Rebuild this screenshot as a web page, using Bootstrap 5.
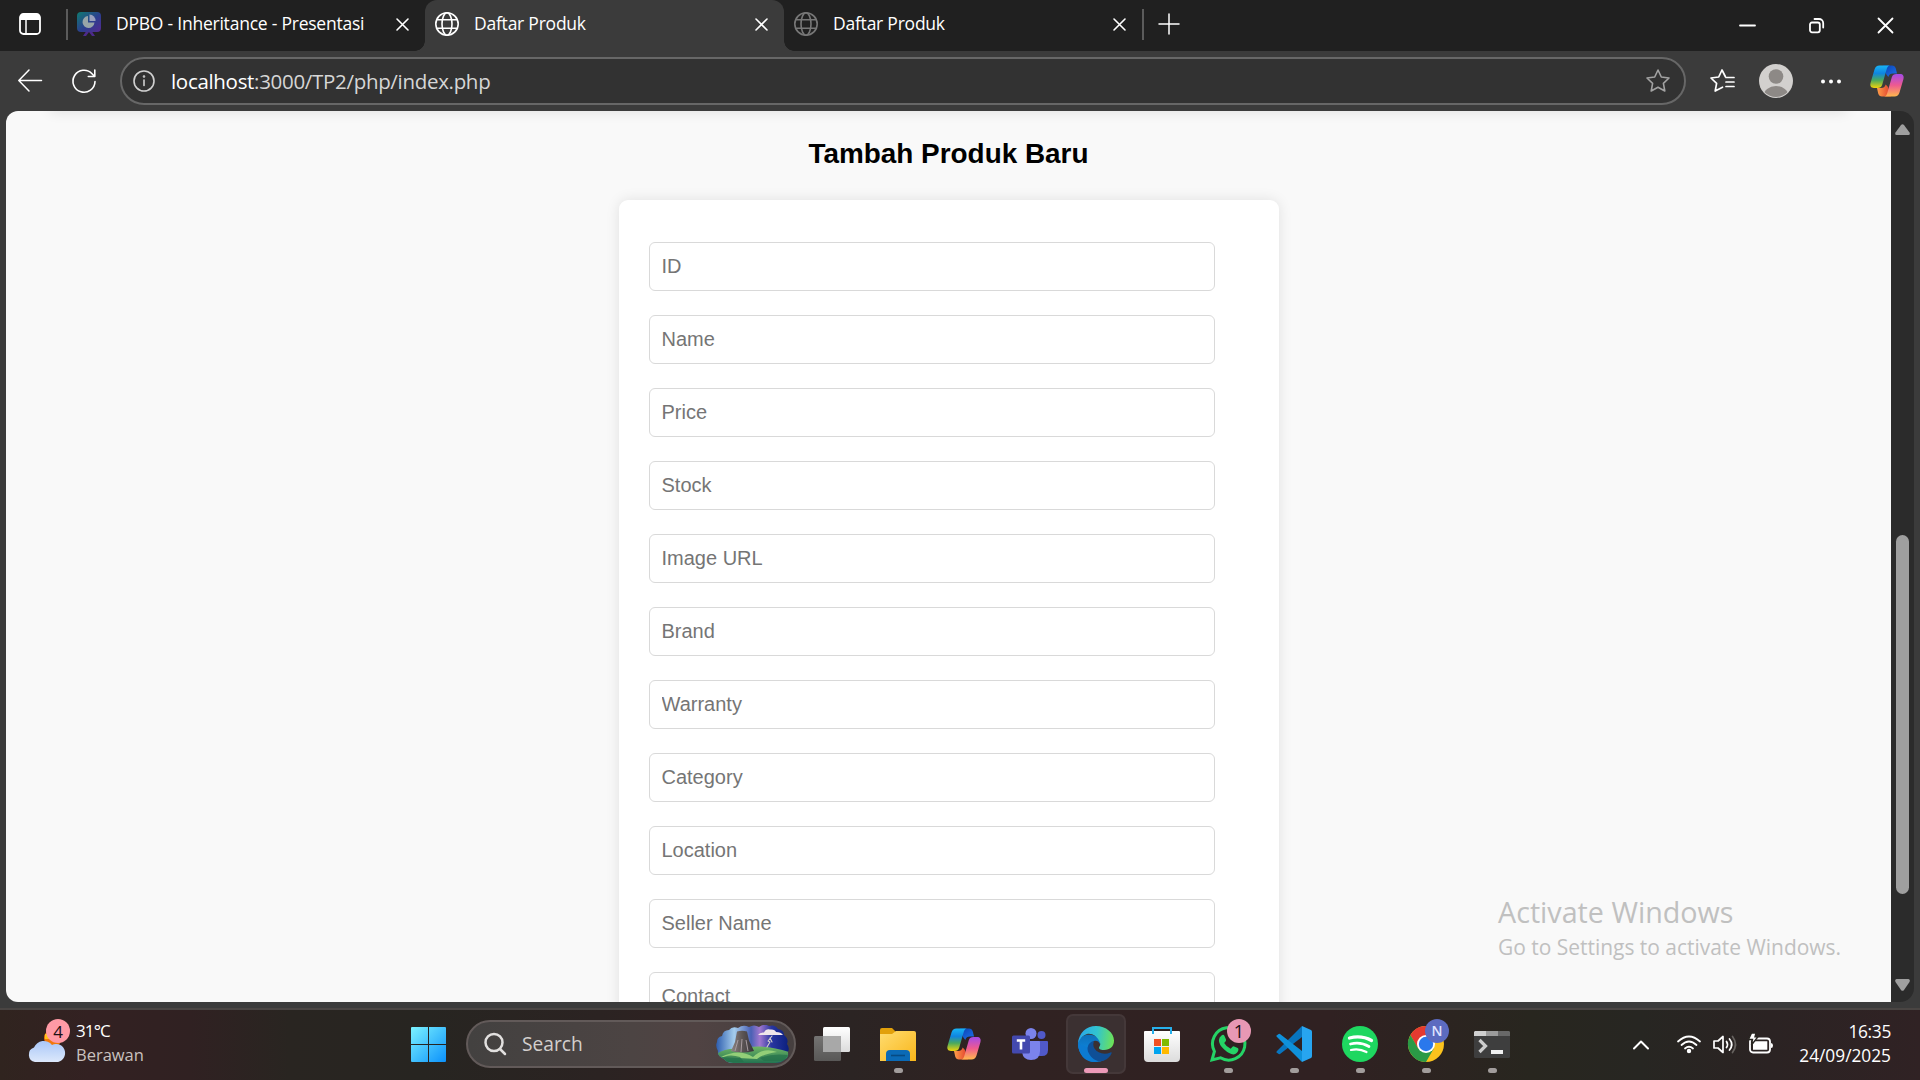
<!DOCTYPE html>
<html lang="id">
<head>
<meta charset="utf-8">
<title>Daftar Produk</title>
<link href="https://cdn.jsdelivr.net/npm/bootstrap@5.3.0/dist/css/bootstrap.min.css" rel="stylesheet">
<style>
html,body{height:1080px;overflow:hidden}
body{width:1920px;background:#3b3b3b;font-family:"Open Sans","Noto Sans",sans-serif;color:#fff;line-height:1}
svg{display:block;flex:none;overflow:visible}
.ln{fill:none;stroke:currentColor;stroke-linecap:round;stroke-linejoin:round}
.tabstrip{height:51px;background:#202020}
.tab-actions{width:66px;padding-left:19px;margin-top:-3px}
.vsep{width:2px;height:31px;background:#5b5b5b;flex:none;margin-top:-2px}
.btab{height:51px;font-size:17.500px;letter-spacing:-.23px;padding-bottom:3px}
.btab-label{margin-left:15px;white-space:nowrap;flex:1}
.btab-1{width:357px;padding-left:9px;padding-right:16px}
.btab-2{width:359px;padding-left:10px;padding-right:16px;background:#3b3b3b;border-radius:12px 12px 0 0;position:relative}
.btab-2::before,.btab-2::after{content:"";position:absolute;bottom:0;width:10px;height:10px}
.btab-2::before{left:-10px;background:radial-gradient(circle at 0 0,transparent 9.5px,#3b3b3b 10px)}
.btab-2::after{right:-10px;background:radial-gradient(circle at 100% 0,transparent 9.5px,#3b3b3b 10px)}
.btab-3{width:358px;padding-left:10px;padding-right:16px}
.new-tab{margin-left:14px;margin-top:-4px}
.win-ctl{padding-right:27px;gap:54px}
.toolbar{height:60px;padding:0 16px 0 18px}
.addr{width:1566px;height:48px;border:2px solid #676767;border-radius:24px;background:#323232;margin-left:24px;padding:0 14px 0 11px;font-size:20.500px;letter-spacing:-.31px}
.addr-path{color:#d6d6d6;margin-left:16px;padding-top:1px}
.viewport-row{height:891px;padding:0 6px}
.page{width:1885px;height:891px;background:#f9f9f9;border-radius:12px 0 0 12px;overflow:hidden;position:relative;font-family:"Liberation Sans",Arial,sans-serif}
.page-shadow{position:absolute;left:44px;right:44px;top:-12px;height:12px;box-shadow:0 0 14px rgba(0,0,0,.12)}
.page-title{font-size:27.900px;font-weight:700;color:#000;margin:27px 0 31px;line-height:31px}
.form-box{width:660px;height:1000px;background:#fff;border-radius:9px;box-shadow:0 0 14px rgba(0,0,0,.1);padding:42px 30px 0;gap:24px;flex:none}
.form-box .form-control{width:566px;height:49px;flex:none;border:1px solid #d9d9d9;border-radius:6px;padding:0 12px;font-size:20px;color:#757575;background:#fff;line-height:47px}
.form-box .form-control::placeholder{color:#757575;opacity:1}
.watermark{position:absolute;left:1492px;top:783px;color:#c0c0c0;font-family:"Open Sans",sans-serif;white-space:nowrap}
.wm-1{font-size:28.700px;line-height:36px}
.wm-2{font-size:20.950px;line-height:34px}
.sbar{width:23px;height:891px;background:#2b2b2b;border-radius:0 14px 14px 0;padding:13px 0 11px}
.thumb{width:13px;height:359px;background:#9f9f9f;border-radius:7px;margin-top:400px}
.win-edge{height:8px;border-bottom:2px solid #4a4543}
.taskbar{height:70px;background:linear-gradient(90deg,#30241f 0,#332122 90px,#302122 190px,#292521 290px,#272521 420px,#2b2322 600px,#302122 720px,#2b2423 850px,#302222 1000px,#302122 1330px,#28261f 1530px,#272622 1640px,#2b2323 1770px,#302224 1920px)}
.weather{width:411px;padding:0 0 4px 28px;font-size:16.500px}
.weather-ico{position:relative;width:42px;height:48px}
.bub{position:absolute;width:24px;height:24px;border-radius:50%;font-size:17px;color:#1b1014;display:flex;align-items:center;justify-content:center;line-height:1}
.bub-w{right:0;top:0;background:#ff9aa5}
.bub-c{left:32px;top:9px;background:#e898b4;font-size:18px}
.bub-n{left:32px;top:9px;background:#5c6bc0;color:#dfe3ff;font-size:14px;font-weight:600}
.weather-txt{gap:8px;margin-left:6px}
.temp{font-size:17px;letter-spacing:-.9px}
.muted-t{color:#c9c1bf}
.find{width:330px;height:48px;border:2px solid #625a59;border-radius:24px;background:linear-gradient(90deg,#434140,#4c4443 50%,#504343 70%,#463f3f);margin-left:20px;margin-top:-2px;padding:0 5px 0 16px;font-size:19.200px;color:#d3cfcd}
.apps{margin-left:3px}
.slot{width:66px;height:70px;position:relative}
.slot.on::before{content:"";position:absolute;left:3px;top:4px;width:60px;height:60px;border-radius:7px;background:#3b3031;border:2px solid #443839}
.slot svg{position:relative}
.slot .ico{height:68px}
.run{position:absolute;left:50%;top:58px;width:9px;height:5px;margin-left:-4.5px;border-radius:3px;background:#a29d9c}
.run.act{width:24px;margin-left:-12px;background:#ec9ab8}
.tray{padding-right:29px}
.clock{font-size:17.300px;width:117px;gap:7px;padding-bottom:3px}
.clock-h{letter-spacing:-.3px}
</style>
<script src="https://cdn.jsdelivr.net/npm/bootstrap@5.3.0/dist/js/bootstrap.bundle.min.js"></script>
</head>
<body class="d-flex flex-column m-0">
<svg width="0" height="0" class="position-absolute">
<defs>
<linearGradient id="cpA" x1="0" y1="0" x2="0" y2="1"><stop offset="0" stop-color="#18b4f5"/><stop offset=".35" stop-color="#0f85e0"/><stop offset=".65" stop-color="#4aa95e"/><stop offset="1" stop-color="#f2d40a"/></linearGradient>
<linearGradient id="cpB" x1="0" y1="0" x2="0" y2="1"><stop offset="0" stop-color="#a44ae8"/><stop offset=".5" stop-color="#ee5a90"/><stop offset="1" stop-color="#ffb84d"/></linearGradient>
<linearGradient id="cpC" x1="0" y1="0" x2="1" y2="1"><stop offset="0" stop-color="#0b3fae"/><stop offset="1" stop-color="#1d74ee"/></linearGradient>
<linearGradient id="cpD" x1="0" y1="0" x2="1" y2="0"><stop offset="0" stop-color="#ffa04a"/><stop offset="1" stop-color="#e0392b"/></linearGradient>
<linearGradient id="win" gradientUnits="userSpaceOnUse" x1="0" y1="0" x2="35" y2="35"><stop offset="0" stop-color="#7cf3ff"/><stop offset="1" stop-color="#0b91fb"/></linearGradient>
<linearGradient id="cld" x1="0" y1="0" x2="0" y2="1"><stop offset="0" stop-color="#a9c7f8"/><stop offset="1" stop-color="#dce8fb"/></linearGradient>
<linearGradient id="edA" x1="0" y1=".5" x2="1" y2=".6"><stop offset="0" stop-color="#2aa7ea"/><stop offset=".5" stop-color="#31c4cf"/><stop offset="1" stop-color="#6fe354"/></linearGradient>
<linearGradient id="edB" x1="0" y1="0" x2="0" y2="1"><stop offset="0" stop-color="#0f6fb8"/><stop offset=".6" stop-color="#0c86de"/><stop offset="1" stop-color="#0c78d3"/></linearGradient>
<linearGradient id="fol" x1="0" y1="0" x2="1" y2="1"><stop offset="0" stop-color="#ffdc70"/><stop offset="1" stop-color="#f9b61a"/></linearGradient>
<linearGradient id="fav" x1="0" y1="0" x2="1" y2="1"><stop offset="0" stop-color="#0f7b70"/><stop offset=".55" stop-color="#2c3e8e"/><stop offset="1" stop-color="#562a91"/></linearGradient>
<linearGradient id="gry" x1="0" y1="0" x2="0" y2="1"><stop offset="0" stop-color="#fff"/><stop offset="1" stop-color="#dcdcdc"/></linearGradient>
<linearGradient id="drk" x1="0" y1="0" x2="0" y2="1"><stop offset="0" stop-color="#747372"/><stop offset="1" stop-color="#595857"/></linearGradient>
<linearGradient id="sky" x1="0" y1="0" x2="1" y2="0"><stop offset="0" stop-color="#2c5cae"/><stop offset=".25" stop-color="#a5cdec"/><stop offset=".48" stop-color="#4a60b4"/><stop offset=".6" stop-color="#a078cf"/><stop offset=".76" stop-color="#2836a0"/><stop offset="1" stop-color="#0b1f7c"/></linearGradient>
<linearGradient id="rock" x1="0" y1="0" x2="1" y2="0"><stop offset="0" stop-color="#8d8482"/><stop offset=".5" stop-color="#5b5454"/><stop offset="1" stop-color="#38343a"/></linearGradient>
<linearGradient id="hill" x1="0" y1="0" x2="0" y2="1"><stop offset="0" stop-color="#6fb565"/><stop offset="1" stop-color="#1f7050"/></linearGradient>
<g id="copilot"><path fill="url(#cpC)" d="M13 .5h9c2 0 3.200 1 3.800 3l1.200 5h-4c-2.500 0-4 1-4.700 3.500L16 9Z"/><path fill="url(#cpD)" d="M21 31.500h-9c-2 0-3.200-1-3.800-3L7 23h4c2.500 0 4-1 4.700-3.500L18 22Z"/><path fill="url(#cpA)" d="M9.500.5h10.500c-1.700 0-2.600 1.300-3.200 3.300l-4.600 16c-.7 2.300-2.200 3.200-4.700 3.200H4c-3 0-4.300-2-3.400-5.200L4.500 4.500C5.300 1.800 6.900.5 9.500.5Z"/><path fill="url(#cpB)" d="M24.500 31.500H14c1.700 0 2.600-1.300 3.200-3.300l4.600-16C22.500 9.900 24 9 26.500 9H30c3 0 4.300 2 3.400 5.200l-3.900 13.300c-.8 2.700-2.400 4-5 4Z"/></g>
<g id="globe" fill="none" stroke="currentColor" stroke-width="1.600"><circle cx="12" cy="12" r="11.200"/><ellipse cx="12" cy="12" rx="5" ry="11.200"/><path d="M2 7.800h20M2 16.200h20"/></g>
<path id="star" d="M12 1l3.300 7 7.700 1-5.600 5.300 1.400 7.700-6.800-3.700L5.200 22l1.400-7.700L1 9l7.700-1Z"/>
<path id="xx" d="M1 1l11 11M12 1L1 12"/>
</defs>
</svg>

<header class="tabstrip d-flex align-items-center flex-shrink-0">
  <div class="tab-actions"><svg width="22" height="22"><rect class="ln" x="1" y="1" width="20" height="20" rx="3.500" stroke-width="1.800"/><path fill="#fff" d="M1 7V4a3 3 0 0 1 3-3h14a3 3 0 0 1 3 3v3Z"/><path class="ln" stroke-width="1.500" d="M7 7v14"/></svg></div>
  <span class="vsep"></span>
  <div class="btab btab-1 d-flex align-items-center">
    <svg width="24" height="24"><path fill="#4d2a8c" d="M6 24l4-6h4l4 6h-3l-3-4-3 4Z"/><rect width="24" height="20" rx="4" fill="url(#fav)"/><path fill="#98a5a8" d="M11 4v6.500h6.500A6 6 0 1 1 11 4Z"/><path fill="#9aa0bd" d="M12.500 2.500A6 6 0 0 1 18.500 9h-6Z"/></svg>
    <span class="btab-label">DPBO - Inheritance - Presentasi</span>
    <svg class="ln" width="13" height="13" stroke-width="1.600"><use href="#xx"/></svg>
  </div>
  <div class="btab btab-2 d-flex align-items-center">
    <svg width="24" height="24"><use href="#globe"/></svg>
    <span class="btab-label">Daftar Produk</span>
    <svg class="ln" width="13" height="13" stroke-width="1.600"><use href="#xx"/></svg>
  </div>
  <div class="btab btab-3 d-flex align-items-center">
    <svg width="24" height="24" color="#777"><use href="#globe"/></svg>
    <span class="btab-label">Daftar Produk</span>
    <svg class="ln" width="13" height="13" stroke-width="1.600"><use href="#xx"/></svg>
  </div>
  <span class="vsep"></span>
  <svg class="ln new-tab" width="22" height="22" stroke-width="1.500"><path d="M11 1v20M1 11h20"/></svg>
  <div class="win-ctl d-flex align-items-center ms-auto">
    <svg class="ln" width="15" height="15" stroke-width="1.800"><path d="M0 7.500h15"/></svg>
    <svg class="ln" width="15" height="15" stroke-width="1.800"><rect x="1" y="4.500" width="9.800" height="9.800" rx="2"/><path d="M5.500 1H10a4.200 4.200 0 0 1 4.200 4.200V9.500"/></svg>
    <svg class="ln" width="15" height="15" stroke-width="1.800"><path d="M.5.5l14 14M14.500.5l-14 14"/></svg>
  </div>
</header>

<nav class="toolbar d-flex align-items-center flex-shrink-0">
  <svg class="ln" width="24" height="24" stroke-width="1.500"><path d="M23.500 11.500H1M11 1L.8 11.500 11 22"/></svg>
  <svg class="ln" style="margin-left:30px" width="24" height="24" stroke-width="1.600"><path d="M23 12.500A11 11 0 1 1 20 4.700L22.500 7.300M22.800 1v6.500h-6.500"/></svg>
  <div class="addr d-flex align-items-center">
    <svg class="ln" width="22" height="22" color="#d0d0d0" stroke-width="1.600"><circle cx="11" cy="11" r="10"/><path d="M11 10v5.500"/><circle cx="11" cy="6.500" r=".5"/></svg>
    <span class="flex-grow-1 addr-path"><span class="text-white">localhost</span>:3000/TP2/php/index.php</span>
    <svg class="ln" width="24" height="24" color="#a2a2a2" stroke-width="1.600"><use href="#star"/></svg>
  </div>
  <svg class="ln" style="margin-left:24px" width="24" height="24" stroke-width="1.700"><path d="M12.500 18.200L5.200 22l1.400-7.700L1 9l7.700-1L12 1l3.300 6.500M16 8.500h8M16 13h8M16 17.500h8"/></svg>
  <svg style="margin-left:25px" width="34" height="34"><defs><clipPath id="av"><circle cx="17" cy="17" r="16"/></clipPath></defs><circle cx="17" cy="17" r="17" fill="#d2d0ce"/><g fill="#8d8986" clip-path="url(#av)"><circle cx="17" cy="12.500" r="7.300"/><ellipse cx="17" cy="32" rx="12.500" ry="10"/></g></svg>
  <svg style="margin-left:28px" width="20" height="4" fill="#fff"><circle cx="2" cy="2.500" r="2"/><circle cx="10" cy="2.500" r="2"/><circle cx="18" cy="2.500" r="2"/></svg>
  <svg class="ms-auto" width="34" height="32"><use href="#copilot"/></svg>
</nav>

<main class="viewport-row d-flex flex-shrink-0">
  <section class="page d-flex flex-column align-items-center">
    <div class="page-shadow"></div>
    <h2 class="page-title">Tambah Produk Baru</h2>
    <form class="form-box d-flex flex-column">
      <input class="form-control" placeholder="ID">
      <input class="form-control" placeholder="Name">
      <input class="form-control" placeholder="Price">
      <input class="form-control" placeholder="Stock">
      <input class="form-control" placeholder="Image URL">
      <input class="form-control" placeholder="Brand">
      <input class="form-control" placeholder="Warranty">
      <input class="form-control" placeholder="Category">
      <input class="form-control" placeholder="Location">
      <input class="form-control" placeholder="Seller Name">
      <input class="form-control" placeholder="Contact">
    </form>
    <div class="watermark"><div class="wm-1">Activate Windows</div><div class="wm-2">Go to Settings to activate Windows.</div></div>
  </section>
  <aside class="sbar d-flex flex-column align-items-center">
    <svg width="15" height="11"><path fill="#9f9f9f" d="M6 1Q7.500-.7 9 1l5.500 7.500q1 2-1 2.500h-12Q-.5 10.500.5 8.500Z"/></svg>
    <div class="thumb"></div>
    <svg class="mt-auto" width="15" height="12"><path fill="#9f9f9f" d="M6 11q1.500 1.700 3 0l5.500-8q1-2.500-1-3h-12q-2 .5-1 3Z"/></svg>
  </aside>
</main>
<div class="win-edge flex-shrink-0"></div>

<footer class="taskbar d-flex align-items-center flex-shrink-0">
  <div class="weather d-flex align-items-center">
    <div class="weather-ico">
      <svg width="42" height="48"><circle cx="25" cy="19" r="9" fill="#f2780c"/><path fill="#ffc21a" d="M17 15h6v5h-6z"/><path fill="url(#cld)" d="M7 43A7.500 7.500 0 0 1 6 28.500 10.500 10.500 0 0 1 24 26 9 9 0 1 1 28 43Z"/></svg>
      <span class="bub bub-w">4</span>
    </div>
    <div class="weather-txt d-flex flex-column"><span class="temp">31°C</span><span class="muted-t">Berawan</span></div>
  </div>
  <svg style="margin-top:-1px" width="35" height="35"><path fill="url(#win)" d="M1 0h16v17H0V1q0-1 1-1ZM18 0h16q1 0 1 1v16H18ZM0 18h17v17H1q-1 0-1-1ZM18 18h17v16q0 1-1 1H18Z"/></svg>
  <div class="find d-flex align-items-center">
    <svg class="ln" width="22" height="22" stroke-width="2.500" color="#e2e0df"><circle cx="10" cy="9.500" r="8.500"/><path d="M16 16l5 5"/></svg>
    <span class="flex-grow-1" style="margin-left:16px">Search</span>
    <svg width="73" height="38"><defs><clipPath id="hl"><path d="M8 34Q1 31 2 26-1 21 1 17q0-5 5-6 1-6 7-6 3-4 9-2 5-4 11-1 5-3 10 0 5-4 10-1 6-2 9 3 6 1 6 6 5 4 3 9 3 4 1 8 1 6-4 8-3 3-9 3H17q-6 0-9-4Z"/></clipPath></defs><g clip-path="url(#hl)"><path fill="url(#sky)" d="M0 0h73v38H0z"/><path fill="url(#hill)" d="M0 29q10-6 22-5 25-6 51 3v12H0Z"/><path fill="url(#rock)" d="M21 6.500q5-1.500 10 0l2 9 5 10.500q-12 3-23 0l4-9Z"/><path stroke="#a89ca0" fill="none" d="M22 15l-3 11M26 14l-1 13M30 15l2 11"/><path fill="#93cf78" d="M5 32q18-9 32 0 10-10 24-5-14 2-20 7Z"/><path fill="#24704a" d="M4 34q8-6 20-2l4 5H10ZM44 33q12-5 28-3l-4 6H48Z" opacity=".7"/></g><path fill="#efe6ea" d="M42 10q2-3 6-2.500 2-4 6-3 5-.5 6 2.500 5 0 7 3Z"/><path class="ln" stroke="#fff" stroke-width="1.100" d="M56 11l-4 5 2 1-3 5M54 13l2 4"/></svg>
  </div>
  <div class="apps d-flex">
    <div class="slot"><div class="ico d-flex align-items-center justify-content-center"><svg width="36" height="34"><rect x="9" width="27" height="25" rx="1.500" fill="url(#gry)"/><rect y="9" width="27" height="25" rx="1.500" fill="url(#drk)"/><path fill="#a8a8a8" d="M9 9h18v16H9z"/></svg></div></div>
    <div class="slot"><div class="ico d-flex align-items-center justify-content-center"><svg width="36" height="33"><path fill="#e2a00b" d="M0 8V2q0-2 2-2h10l4 4v4Z"/><path fill="url(#fol)" d="M0 6h12l4-3h18q2 0 2 2v28H0Z"/><path fill="#0b6ab6" d="M6 33v-7q0-4 4-4h16q4 0 4 4v7Z"/><path stroke="#074a82" stroke-width="1.600" d="M11 27.500h14"/></svg></div><span class="run"></span></div>
    <div class="slot"><div class="ico d-flex align-items-center justify-content-center"><svg width="34" height="32"><use href="#copilot"/></svg></div></div>
    <div class="slot"><div class="ico d-flex align-items-center justify-content-center"><svg width="36" height="33"><circle cx="29.500" cy="7" r="4" fill="#5059c9"/><path fill="#5059c9" d="M25 13h10q1 0 1 1v8q0 6-6 6h-5Z"/><circle cx="19" cy="5.500" r="5.500" fill="#7b83eb"/><path fill="#7b83eb" d="M10 13h17q1 0 1 1v9q0 9-9 9-8 0-9-8Z"/><rect y="7.500" width="18" height="18" rx="1.500" fill="#4349ae"/><path stroke="#fff" stroke-width="2.600" d="M4.800 12.500h8.400M9 12.500V21.500"/></svg></div></div>
    <div class="slot on"><div class="ico d-flex align-items-center justify-content-center"><svg width="36" height="36"><path fill="url(#edB)" d="M0 17C1 10 8 8 14 9c5 1 9 5 8 9-1-3-4-4-6-3-3 1-4 4-4 7 0 6 5 10 11 11-2 2-5 3-7 3C7 36 0 28 0 17Z"/><path fill="#0c7bd2" d="M0 18C0 28 8 36 18 36c3 0 6-1 8-2-8 0-14-6-14-12Z"/><path fill="#0f4f97" d="M14 15.500c-4 2-6 7-3 12 3 6 10 9.500 15 7 4-1.500 6-4 7.500-7 .5-1-.3-1.500-1-1-6 2.500-13 1-16-4-1.500-2.500-1.500-5-.5-7Z"/><path fill="url(#edA)" d="M0 17C1 7 8 0 18 0s18 7 18 14.500c0 6-4 9.500-10 9.500-4 0-6-1.500-4.500-3.500 1-1.500 1-3 0-5C19 10 14 7 9 8c-4 1-7 4-9 9Z"/></svg></div><span class="run act"></span></div>
    <div class="slot"><div class="ico d-flex align-items-center justify-content-center"><svg width="36" height="35"><path fill="url(#gry)" d="M1 4h34q1 0 1 1v26q0 4-4 4H4q-4 0-4-4V5q0-1 1-1Z"/><path fill="none" stroke="#27b0ec" stroke-width="2" d="M9 7V1h18v6"/><path fill="#f25022" d="M10 12h7v7h-7z"/><path fill="#7fba00" d="M18 12h7v7h-7z"/><path fill="#00a4ef" d="M10 20h7v7h-7z"/><path fill="#ffb900" d="M18 20h7v7h-7z"/></svg></div></div>
    <div class="slot"><div class="ico d-flex align-items-center justify-content-center"><svg width="36" height="36"><path fill="none" stroke="#25d366" stroke-width="3" d="M2 34l2.400-8.600A16.200 16.200 0 1 1 10.500 31.800Z"/><path fill="#25d366" d="M11.500 9.500q2-1.500 3 .5l1.500 3.500q.3 1-.5 2l-1.300 1.600q2.200 4 6.500 5.700l1.800-2q.7-.8 1.700-.4l3.500 1.700q1 .6.700 2-1 4-5 4.300-4 0-9.200-4.800Q8.700 18.500 8.900 14q.2-3 2.600-4.500Z"/></svg></div><span class="bub bub-c">1</span><span class="run"></span></div>
    <div class="slot"><div class="ico d-flex align-items-center justify-content-center"><svg width="36" height="36"><path fill="#0875bf" d="M1 25l25-25v11L4 28q-1 .5-2-.5l-1.500-1Q0 26 1 25Z"/><path fill="#0f91db" d="M1 11l25 25V25L4 8Q3 7.500 2 8.500L.5 9.500Q0 10 1 11Z"/><path fill="#27a5f0" d="M26 0l9 4q1 .5 1 2v24q0 1.500-1 2l-9 4Z"/></svg></div><span class="run"></span></div>
    <div class="slot"><div class="ico d-flex align-items-center justify-content-center"><svg width="36" height="36"><circle cx="18" cy="18" r="18" fill="#1ed760"/><g class="ln" stroke="#1d1515"><path stroke-width="3.300" d="M7.500 12q12-3 22 2.500"/><path stroke-width="2.700" d="M8.500 18q10-2.500 18.500 2.500"/><path stroke-width="2.200" d="M9 24q8-2 15.500 2"/></g></svg></div><span class="run"></span></div>
    <div class="slot"><div class="ico d-flex align-items-center justify-content-center"><svg width="36" height="36"><circle cx="18" cy="18" r="18" fill="#fcc31d"/><path fill="#e53a30" d="M2.400 9A18 18 0 0 1 33.600 9H18l-8 13.500Z"/><path fill="#2a9a46" d="M2.400 9A18 18 0 0 0 18 36l7.800-13.500H10.200Z"/><circle cx="18" cy="18" r="9" fill="#fff"/><circle cx="18" cy="18" r="7.200" fill="#2a78ec"/></svg></div><span class="bub bub-n">N</span><span class="run"></span></div>
    <div class="slot"><div class="ico d-flex align-items-center justify-content-center"><svg width="36" height="27"><rect width="36" height="27" rx="1.500" fill="#3e3e3e"/><path fill="#cfcfcf" d="M1 0h11v5H0V1Z"/><path fill="#9b9b9b" d="M12 0h12v5H12z"/><path fill="#686868" d="M24 0h11l1 1v4H24Z"/><path fill="none" stroke="#ccc" stroke-width="3.200" d="M5.500 9l6 6-6 6"/><path fill="#f0f0f0" d="M17 19h12v4H17z"/></svg></div><span class="run"></span></div>
  </div>
  <div class="tray d-flex align-items-center ms-auto">
    <svg class="ln" width="16" height="9" stroke-width="2"><path d="M1 7.500l7-7 7 7"/></svg>
    <svg class="ln" style="margin-left:28px" width="24" height="18" stroke-width="1.800"><path d="M1 5.500Q12-4.500 23 5.500M4.500 9Q12 2 19.500 9M8 12.500q4-3.500 8 0"/><circle cx="12" cy="15" r="1.300" fill="#fff"/></svg>
    <svg class="ln" style="margin-left:12px" width="24" height="20" stroke-width="1.700"><path d="M1 6h4L10 1.500v16L5 13H1ZM13.500 6.500q2 3 0 6M16.500 4q4.500 5.500 0 11"/><path stroke="#66625f" d="M19.500 1.500q6 8 0 16"/></svg>
    <svg style="margin-left:12px;margin-top:-2px" width="25" height="20"><rect class="ln" x="1" y="4.500" width="20" height="14" rx="3" stroke-width="1.800"/><path fill="#fff" d="M4 7.300h14.300v8.400H4ZM22 9q2 0 2 2.500T22 14Z"/><path fill="#fff" stroke="#292622" stroke-width="1.400" d="M2.500-1H7L6 2.700h3L2.500 11l1-5.500H-.5Z"/></svg>
    <div class="clock d-flex flex-column align-items-end"><span class="clock-h">16:35</span><span>24/09/2025</span></div>
  </div>
</footer>
</body>
</html>
